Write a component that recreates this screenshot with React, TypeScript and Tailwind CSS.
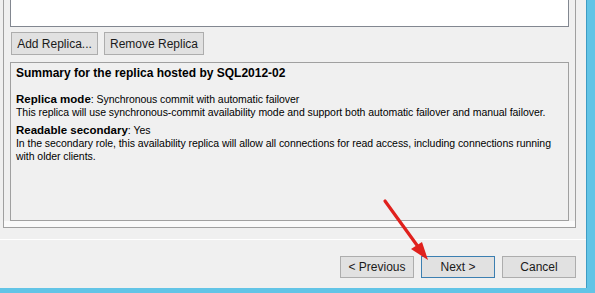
function Btn({ label, w, focused = false }: { label: string; w: string; focused?: boolean }) {
  return (
    <button
      className={`${w} flex h-full items-center justify-center border bg-[#e1e1e1] text-[12px] text-[#1a1a1a] ${
        focused ? "border-[#3c7fb1]" : "border-[#adadad]"
      }`}
    >
      {label}
    </button>
  );
}

export default function App() {
  return (
    <div className="relative flex h-[293px] w-[595px] flex-col overflow-hidden bg-[#f0f0f0] font-['Liberation_Sans',Arial,sans-serif] text-black">
      <div className="flex flex-1">
        <div className="flex w-[586px] flex-col">
          {/* group frame */}
          <div className="ml-[3px] flex h-[228px] w-[573px] flex-col border-x border-b border-[#a0a0a0] px-[6px]">
            <div className="h-[27px] w-full border-x border-b border-[#828790] bg-white" />
            <div className="mt-[5px] flex h-[23px] gap-[6px] pl-px">
              <Btn label="Add Replica..." w="w-[87px]" />
              <Btn label="Remove Replica" w="w-[100px]" />
            </div>
            <div className="mt-[7px] h-[159px] whitespace-nowrap border border-[#a0a0a0] bg-[#f0f0f0] px-[5px] pt-[2px] text-[10.5px] leading-[13px] tracking-[-0.05px]">
              <div className="text-[12px] font-bold leading-[16px] tracking-normal">Summary for the replica hosted by SQL2012-02</div>
              <div className="mt-[12px]">
                <span className="text-[11.5px] font-bold tracking-normal">Replica mode</span>: Synchronous commit with automatic failover
              </div>
              <div>
                This replica will use synchronous-commit availability mode and support both automatic failover and manual failover.
              </div>
              <div className="mt-[5px]">
                <span className="text-[11.5px] font-bold tracking-normal">Readable secondary</span>: Yes
              </div>
              <div>
                In the secondary role, this availability replica will allow all connections for read access, including connections running
                <br />
                with older clients.
              </div>
            </div>
            <div className="mx-[-6px] flex-1 bg-[#fafafa]" />
          </div>
          {/* separator */}
          <div className="mt-[11px] h-px w-full bg-white" />
          {/* wizard buttons */}
          <div className="mt-[16px] flex h-[22px] justify-end gap-[7px] pr-[10px]">
            <Btn label="< Previous" w="w-[74px]" />
            <Btn label="Next >" w="w-[74px]" focused />
            <Btn label="Cancel" w="w-[74px]" />
          </div>
        </div>
        <div className="w-[9px] border-l border-[#3e9cc4] bg-[#62c4e6]" />
      </div>
      <div className="h-[5px] w-full bg-[#62c4e6]" />

      {/* red annotation arrow */}
      <svg className="absolute left-0 top-0" width="595" height="293" viewBox="0 0 595 293">
        <line x1="385" y1="201" x2="419" y2="248" stroke="#e0211d" strokeWidth="3.2" strokeLinecap="round" />
        <polygon points="428,260 411,249 422,242" fill="#e0211d" />
      </svg>
    </div>
  );
}
